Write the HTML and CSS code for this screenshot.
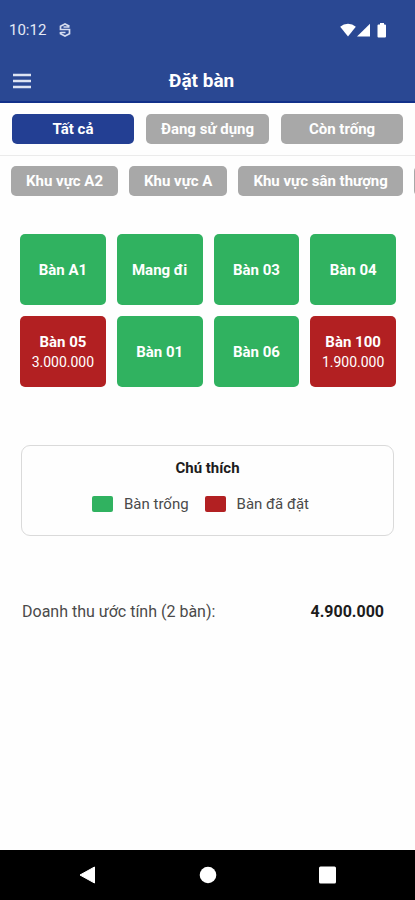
FILE: index.html
```html
<!DOCTYPE html>
<html lang="vi">
<head>
<meta charset="utf-8">
<meta name="viewport" content="width=device-width, initial-scale=1">
<title>Đặt bàn</title>
<link rel="stylesheet" href="styles.css">
</head>
<body>
<header class="header">
  <div class="status">
    <span class="clock">10:12</span>
    <svg class="status-app" width="12" height="14" viewBox="0 0 12 14" fill="none" stroke="currentColor" stroke-width="1.700"><path d="M10.500 3.200 6 1 1.500 3.200V6.500H10.500V10.800L6 13 1.500 10.800V9M4.500 4H10.500M1.500 9.500H6.500"/></svg>
    <div class="status-icons">
      <svg width="16" height="14" viewBox="0 0 16 14" fill="currentColor"><path d="M8 13.500.2 3.800Q3.500.8 8 .8T15.800 3.800Z"/></svg>
      <svg width="13" height="14" viewBox="0 0 13 14" fill="currentColor"><path d="M13 .8V13.500H0Z"/></svg>
      <svg class="battery" width="10" height="15" viewBox="0 0 10 15" fill="currentColor"><path d="M3 0H7V1.500H8Q9 1.500 9 2.500V13.500Q9 14.500 8 14.500H1.500Q.5 14.500.5 13.500V2.500Q.5 1.500 1.500 1.500H3Z"/></svg>
    </div>
  </div>
  <div class="appbar">
    <button class="menu" type="button" aria-label="Menu">
      <svg width="18" height="16" viewBox="0 0 18 16" stroke="currentColor" stroke-width="2.500"><path d="M0 2H18M0 8H18M0 14H18"/></svg>
    </button>
    <h1 class="title">Đặt bàn</h1>
  </div>
</header>
<main class="content">
  <nav class="filters">
    <button class="chip chip-active" type="button">Tất cả</button>
    <button class="chip" type="button">Đang sử dụng</button>
    <button class="chip" type="button">Còn trống</button>
  </nav>
  <nav class="areas">
    <button class="chip" type="button">Khu vực A2</button>
    <button class="chip" type="button">Khu vực A</button>
    <button class="chip" type="button">Khu vực sân thượng</button>
    <button class="chip" type="button" aria-label="Khu vực khác"></button>
  </nav>
  <section class="tables">
    <button class="table" type="button">Bàn A1</button>
    <button class="table" type="button">Mang đi</button>
    <button class="table" type="button">Bàn 03</button>
    <button class="table" type="button">Bàn 04</button>
    <button class="table table-booked" type="button">Bàn 05<span class="amount">3.000.000</span></button>
    <button class="table" type="button">Bàn 01</button>
    <button class="table" type="button">Bàn 06</button>
    <button class="table table-booked" type="button">Bàn 100<span class="amount">1.900.000</span></button>
  </section>
  <section class="legend">
    <h2 class="legend-title">Chú thích</h2>
    <ul class="legend-items">
      <li class="legend-item"><span class="swatch"></span>Bàn trống</li>
      <li class="legend-item"><span class="swatch swatch-booked"></span>Bàn đã đặt</li>
    </ul>
  </section>
  <section class="revenue">
    <span>Doanh thu ước tính (2 bàn):</span>
    <strong class="total">4.900.000</strong>
  </section>
</main>
<footer class="system-nav">
  <button class="nav-button" type="button" aria-label="Back"><svg width="18" height="18" viewBox="0 0 18 18" fill="currentColor" stroke="currentColor" stroke-linejoin="round"><path d="M1 9 15.500 1V17Z"/></svg></button>
  <button class="nav-button" type="button" aria-label="Home"><svg width="18" height="18" viewBox="0 0 18 18" fill="currentColor"><circle cx="9" cy="9" r="8.300"/></svg></button>
  <button class="nav-button" type="button" aria-label="Recents"><svg width="18" height="18" viewBox="0 0 18 18" fill="currentColor"><rect y=".5" width="17" height="17" rx="1.500"/></svg></button>
</footer>
</body>
</html>
```
FILE: styles.css
```css
* {
  box-sizing: border-box;
}

body {
  display: flex;
  flex-direction: column;
  min-height: 100vh;
  margin: 0;
  background: #fefefe;
  color: #4a4a4a;
  font-family: Roboto, "Liberation Sans", sans-serif;
  font-size: 15px;
  line-height: 20px;
}

button {
  margin: 0;
  padding: 0;
  border: 0;
  background: none;
  color: #fff;
  font: inherit;
}

svg {
  display: block;
}

.header {
  background: #2a4893;
  border-bottom: 2px solid #12308a;
  color: #fff;
}

.status {
  display: flex;
  align-items: center;
  height: 60px;
  padding: 0 28px 0 9px;
  color: #fff;
}

.clock {
  color: #e4e9f5;
}

.status-app {
  margin-left: 13px;
  color: #d5dcef;
}

.status-icons {
  display: flex;
  align-items: center;
  gap: 1px;
  margin-left: auto;
}

.battery {
  margin-left: 6px;
}

.appbar {
  display: grid;
  grid-template-columns: 44px 1fr 56px;
  align-items: center;
  height: 41px;
}

.menu {
  padding-left: 13px;
  color: #dde3f2;
}

.title {
  margin: 0;
  font-size: 19px;
  font-weight: 700;
  text-align: center;
}

.content {
  flex: 1;
}

.filters {
  display: grid;
  grid-template-columns: repeat(3, 1fr);
  gap: 12px;
  padding: 11px 12px;
  border-bottom: 1px solid #ebebeb;
}

.chip {
  height: 30px;
  padding: 0 15px;
  border-radius: 5px;
  background: #a8a8a8;
  font-weight: 700;
  white-space: nowrap;
}

.chip-active {
  background: #233f93;
}

.areas {
  display: flex;
  gap: 11px;
  padding: 10px 0 0 11px;
  overflow: hidden;
}

.areas .chip {
  flex: none;
}

.tables {
  display: grid;
  grid-template-columns: repeat(4, 1fr);
  grid-auto-rows: 71px;
  gap: 11px;
  padding: 38px 19px 0 20px;
}

.table {
  display: flex;
  flex-direction: column;
  align-items: center;
  justify-content: center;
  border-radius: 5px;
  background: #30b260;
  font-weight: 700;
}

.table-booked {
  background: #b22022;
}

.amount {
  font-size: 14px;
  font-weight: 400;
}

.legend {
  margin: 58px 21px 0;
  padding: 12px 0 21px;
  border: 1px solid #dadada;
  border-radius: 9px;
}

.legend-title {
  margin: 0;
  color: #1c1c1c;
  font-size: 15px;
  font-weight: 700;
  text-align: center;
}

.legend-items {
  display: flex;
  justify-content: center;
  gap: 16px;
  margin: 16px 0 0;
  padding: 0 14px 0 0;
  list-style: none;
}

.legend-item {
  display: flex;
  align-items: center;
  gap: 11px;
}

.swatch {
  width: 21px;
  height: 16px;
  border-radius: 2px;
  background: #30b260;
}

.swatch-booked {
  background: #b22022;
}

.revenue {
  display: flex;
  justify-content: space-between;
  padding: 66px 31px 0 22px;
  font-size: 16px;
}

.total {
  color: #1c1c1c;
}

.system-nav {
  display: flex;
  align-items: center;
  justify-content: center;
  gap: 102px;
  height: 50px;
  background: #000;
}
```
